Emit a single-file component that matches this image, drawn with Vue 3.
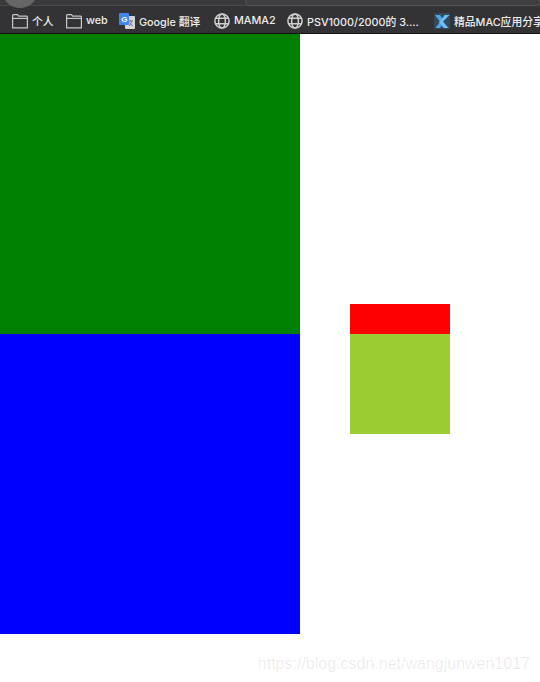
<script setup>
const bookmarks = [
  { icon: 'folder', label: '个人', width: 54 },
  { icon: 'folder', label: 'web', width: 53 },
  { icon: 'translate', label: 'Google 翻译', width: 95 },
  { icon: 'globe', label: 'MAMA2', width: 73 },
  { icon: 'globe', label: 'PSV1000/2000的 3....', width: 147 },
  { icon: 'x', label: '精品MAC应用分享', width: 120 }
]
</script>

<template>
  <div class="page">
    <header class="browser-top">
      <div class="toolbar">
        <span class="avatar"></span>
        <span class="address"></span>
      </div>
      <nav class="bookmarks">
        <span
          v-for="item in bookmarks"
          :key="item.label"
          class="bookmark"
          :style="{ width: item.width + 'px' }"
        >
          <svg v-if="item.icon === 'folder'" class="icon" viewBox="0 0 16 16" fill="none" stroke="#c8c8c8" stroke-width="1.2">
            <path d="M.6 14.8V2.6q0-.9.9-.9h4l1.2 1.4h7.8q.9 0 .9.9v10.8z" />
            <path d="M.6 5.4h14.8" />
          </svg>
          <svg v-else-if="item.icon === 'translate'" class="icon" viewBox="0 0 16 16">
            <rect x="6" y="3" width="10" height="13" rx="1" fill="#d4d4d4" />
            <path d="M9.5 8h4.5M11.7 7v1M10.2 13l3-5M10.6 9.5l3 3.5" stroke="#6f7a86" stroke-width="1" fill="none" />
            <rect x="0" y="0" width="10" height="12" rx="1" fill="#4285f4" />
            <text x="2.3" y="8.6" class="g-letter">G</text>
          </svg>
          <svg v-else-if="item.icon === 'globe'" class="icon" viewBox="0 0 16 16" fill="none" stroke="#cfcfcf" stroke-width="1.5">
            <circle cx="8" cy="8" r="7.1" />
            <ellipse cx="8" cy="8" rx="3.4" ry="7.1" />
            <path d="M1.4 5.2h13.2M1.4 10.8h13.2" />
          </svg>
          <svg v-else class="icon" viewBox="0 0 16 16">
            <rect width="16" height="16" fill="#34495c" />
            <path d="M1 2h5l3.2 4.6-2.4 3.2z" fill="#4fa6e2" />
            <path d="M15.5 2 9 8.6l5.5 6.4H9.8L4.8 9.6 10.8 2z" fill="#6cc0f6" />
            <path d="M5 10 1.5 15h4.3l2.3-3z" fill="#4fa6e2" />
          </svg>
          <span class="label">{{ item.label }}</span>
        </span>
      </nav>
    </header>

    <main class="stage">
      <div class="left-col">
        <div class="green-box"></div>
        <div class="blue-box"></div>
      </div>
      <div class="right-col">
        <div class="red-box"></div>
        <div class="lime-box"></div>
      </div>
    </main>

    <span class="watermark">https://blog.csdn.net/wangjunwen1017</span>
  </div>
</template>

<style>
html,
body {
  margin: 0;
  background: #fff;
}
</style>

<style scoped>
.page {
  position: relative;
  width: 540px;
  height: 682px;
  overflow: hidden;
  background: #fff;
  font-family: "Liberation Sans", "Noto Sans CJK SC", sans-serif;
}

.browser-top {
  height: 34px;
  box-sizing: border-box;
  background: #333335;
  border-bottom: 1px solid #121212;
}

.toolbar {
  position: relative;
  height: 5px;
  background: #3a3a3c;
  border-bottom: 1px solid #4a4a4c;
}

.avatar {
  position: absolute;
  left: 2px;
  top: -28px;
  width: 36px;
  height: 36px;
  border-radius: 50%;
  background: #666;
}

.address {
  position: absolute;
  left: 245px;
  right: 0;
  top: -10px;
  height: 14px;
  border: 1px solid #555;
  border-radius: 4px;
  background: #3f3f41;
}

.bookmarks {
  display: flex;
  align-items: center;
  box-sizing: border-box;
  height: 27px;
  padding: 2px 0 0 12px;
  white-space: nowrap;
}

.bookmark {
  display: flex;
  flex: none;
  align-items: center;
  gap: 4px;
}

.icon {
  flex: none;
  width: 16px;
  height: 16px;
}

.label {
  font-family: Inter, "Noto Sans CJK SC", sans-serif;
  font-size: 10.8px;
  font-weight: 500;
  color: #ececec;
}

.g-letter {
  font-size: 8px;
  font-weight: 700;
  fill: #fff;
}

.stage {
  display: flex;
}

.left-col {
  width: 300px;
}

.green-box {
  height: 300px;
  background: #008000;
}

.blue-box {
  height: 300px;
  background: #0000ff;
}

.right-col {
  margin-left: 50px;
  padding-top: 270px;
  width: 100px;
}

.red-box {
  height: 30px;
  background: #ff0000;
}

.lime-box {
  height: 100px;
  background: #9acd32;
}

.watermark {
  position: absolute;
  right: 10px;
  top: 655px;
  font-size: 16px;
  color: rgba(0, 0, 0, 0.09);
}
</style>
